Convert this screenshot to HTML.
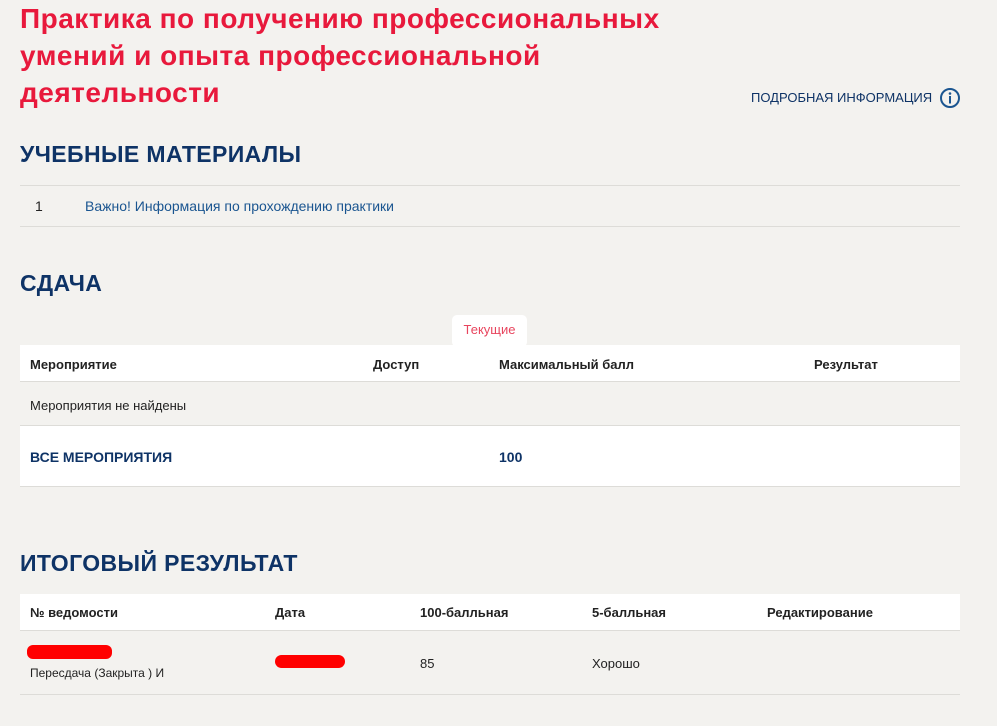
<!DOCTYPE html>
<html><head><meta charset="utf-8"><style>
*{margin:0;padding:0;box-sizing:border-box}
body{width:997px;height:726px;background:#f3f2ef;font-family:"Liberation Sans","DejaVu Sans",sans-serif;position:relative;overflow:hidden;color:#222}
.a{position:absolute;white-space:nowrap}
h1{position:absolute;left:20px;top:0px;font-size:28px;line-height:37px;color:#e8193c;font-weight:bold;letter-spacing:0.5px}
.h2{font-size:23px;font-weight:bold;color:#0e3366;letter-spacing:0.4px}
.w{position:absolute;background:#fff;left:20px;width:940px}
.th{font-size:13px;font-weight:bold;color:#222}
.line{position:absolute;left:20px;width:940px;height:1px;background:#dddcd8}
</style></head><body>
<h1>Практика по получению профессиональных<br>умений и опыта профессиональной<br>деятельности</h1>
<div class="a" style="left:751px;top:90px;font-size:13px;color:#0e3366">ПОДРОБНАЯ ИНФОРМАЦИЯ</div>
<svg class="a" style="left:939px;top:87px" width="22" height="22" viewBox="0 0 22 22"><circle cx="11" cy="11" r="9" fill="none" stroke="#1a5590" stroke-width="2"/><circle cx="11" cy="6.5" r="1.3" fill="#1a5590"/><rect x="10" y="9" width="2" height="7.5" fill="#1a5590"/></svg>
<div class="a h2" style="left:20px;top:141px">УЧЕБНЫЕ МАТЕРИАЛЫ</div>
<div class="line" style="top:185px"></div>
<div class="a" style="left:35px;top:198px;font-size:14px">1</div>
<div class="a" style="left:85px;top:198px;font-size:14px;color:#1a5590">Важно! Информация по прохождению практики</div>
<div class="line" style="top:226px"></div>
<div class="a h2" style="left:20px;top:270px">СДАЧА</div>
<div class="a" style="left:452px;top:315px;width:75px;height:32px;background:#fff;border-radius:5px;color:#e8455e;font-size:13px;text-align:center;line-height:30px">Текущие</div>
<div class="w" style="top:345px;height:37px;border-bottom:1px solid #dddcd8"></div>
<div class="a th" style="left:30px;top:357px">Мероприятие</div>
<div class="a th" style="left:373px;top:357px">Доступ</div>
<div class="a th" style="left:499px;top:357px">Максимальный балл</div>
<div class="a th" style="left:814px;top:357px">Результат</div>
<div class="a" style="left:30px;top:398px;font-size:13px">Мероприятия не найдены</div>
<div class="w" style="top:425px;height:62px;border-top:1px solid #dddcd8;border-bottom:1px solid #dddcd8"></div>
<div class="a" style="left:30px;top:449px;font-size:14px;font-weight:bold;color:#0e3366">ВСЕ МЕРОПРИЯТИЯ</div>
<div class="a" style="left:499px;top:449px;font-size:14px;font-weight:bold;color:#0e3366">100</div>
<div class="a h2" style="left:20px;top:550px">ИТОГОВЫЙ РЕЗУЛЬТАТ</div>
<div class="w" style="top:594px;height:37px;border-bottom:1px solid #dddcd8"></div>
<div class="a th" style="left:30px;top:605px">№ ведомости</div>
<div class="a th" style="left:275px;top:605px">Дата</div>
<div class="a th" style="left:420px;top:605px">100-балльная</div>
<div class="a th" style="left:592px;top:605px">5-балльная</div>
<div class="a th" style="left:767px;top:605px">Редактирование</div>
<div class="a" style="left:27px;top:645px;width:85px;height:14px;background:#f00;border-radius:6px"></div>
<div class="a" style="left:30px;top:666px;font-size:12px">Пересдача (Закрыта ) И</div>
<div class="a" style="left:275px;top:655px;width:70px;height:13px;background:#f00;border-radius:7px"></div>
<div class="a" style="left:420px;top:656px;font-size:13px">85</div>
<div class="a" style="left:592px;top:656px;font-size:13px">Хорошо</div>
<div class="line" style="top:694px"></div>
</body></html>
